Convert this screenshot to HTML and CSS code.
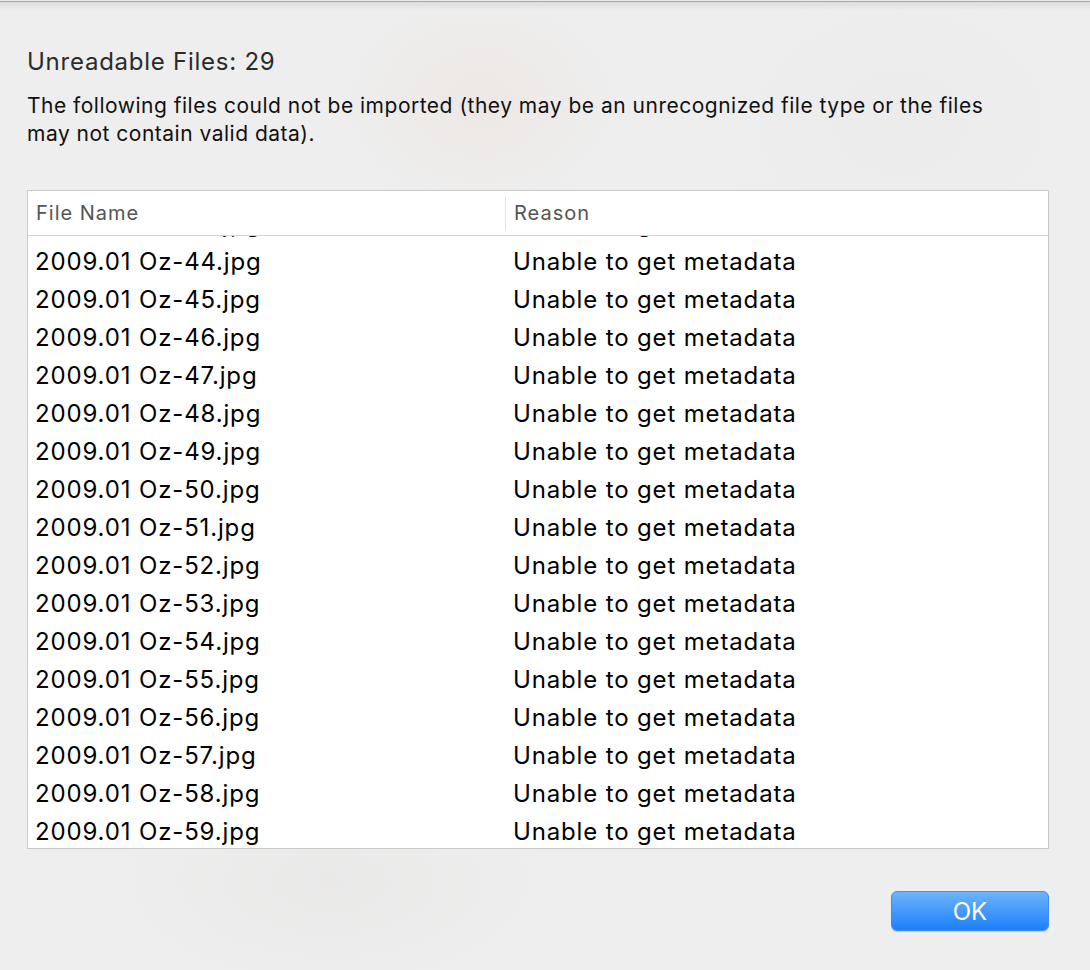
FILE: index.html
```html
<!DOCTYPE html>
<html>
<head>
<meta charset="utf-8">
<link rel="stylesheet" href="styles.css">
</head>
<body>
<div class="dialog">
  <h1 class="title">Unreadable Files: 29</h1>
  <p class="message">The following files could not be imported (they may be an unrecognized file type or the files may not contain valid data).</p>
  <div class="table">
    <div class="thead">
      <div class="th th-name">File Name</div>
      <div class="th th-reason">Reason</div>
    </div>
    <div class="tbody">
      <div class="rows">
        <div class="row"><span class="c-name">2009.01 Oz-43.jpg</span><span class="c-reason">Unable to get metadata</span></div>
        <div class="row"><span class="c-name">2009.01 Oz-44.jpg</span><span class="c-reason">Unable to get metadata</span></div>
        <div class="row"><span class="c-name">2009.01 Oz-45.jpg</span><span class="c-reason">Unable to get metadata</span></div>
        <div class="row"><span class="c-name">2009.01 Oz-46.jpg</span><span class="c-reason">Unable to get metadata</span></div>
        <div class="row"><span class="c-name">2009.01 Oz-47.jpg</span><span class="c-reason">Unable to get metadata</span></div>
        <div class="row"><span class="c-name">2009.01 Oz-48.jpg</span><span class="c-reason">Unable to get metadata</span></div>
        <div class="row"><span class="c-name">2009.01 Oz-49.jpg</span><span class="c-reason">Unable to get metadata</span></div>
        <div class="row"><span class="c-name">2009.01 Oz-50.jpg</span><span class="c-reason">Unable to get metadata</span></div>
        <div class="row"><span class="c-name">2009.01 Oz-51.jpg</span><span class="c-reason">Unable to get metadata</span></div>
        <div class="row"><span class="c-name">2009.01 Oz-52.jpg</span><span class="c-reason">Unable to get metadata</span></div>
        <div class="row"><span class="c-name">2009.01 Oz-53.jpg</span><span class="c-reason">Unable to get metadata</span></div>
        <div class="row"><span class="c-name">2009.01 Oz-54.jpg</span><span class="c-reason">Unable to get metadata</span></div>
        <div class="row"><span class="c-name">2009.01 Oz-55.jpg</span><span class="c-reason">Unable to get metadata</span></div>
        <div class="row"><span class="c-name">2009.01 Oz-56.jpg</span><span class="c-reason">Unable to get metadata</span></div>
        <div class="row"><span class="c-name">2009.01 Oz-57.jpg</span><span class="c-reason">Unable to get metadata</span></div>
        <div class="row"><span class="c-name">2009.01 Oz-58.jpg</span><span class="c-reason">Unable to get metadata</span></div>
        <div class="row"><span class="c-name">2009.01 Oz-59.jpg</span><span class="c-reason">Unable to get metadata</span></div>
      </div>
    </div>
  </div>
  <div class="actions">
    <button class="btn-ok">OK</button>
  </div>
</div>
</body>
</html>
```

FILE: styles.css
```css
html, body {
  margin: 0;
  padding: 0;
  width: 1090px;
  height: 970px;
  overflow: hidden;
}
body {
  font-family: "Inter", "Roboto", "Liberation Sans", sans-serif;
  background: #ececec;
}
.dialog {
  box-sizing: border-box;
  width: 1090px;
  height: 970px;
  border-top: 1px solid #a9a9a9;
  margin-top: 1px;
  padding: 0 41px 0 27px;
  background:
    linear-gradient(to bottom, rgba(0,0,0,0.07), rgba(0,0,0,0) 9px),
    radial-gradient(ellipse 140px 110px at 480px 100px, rgba(236,226,220,0.5), rgba(236,236,236,0) 100%),
    radial-gradient(ellipse 220px 110px at 330px 880px, rgba(228,226,224,0.4), rgba(236,236,236,0) 100%),
    radial-gradient(ellipse 180px 140px at 900px 120px, rgba(232,232,232,0.4), rgba(236,236,236,0) 100%),
    #eeeeee;
}
.title {
  margin: 0;
  padding-top: 45px;
  font-size: 24px;
  font-weight: 400;
  line-height: 30px;
  color: #2b2b2b;
  letter-spacing: 0.75px;
}
.message {
  margin: 15px 0 0 0;
  font-size: 21px;
  line-height: 28px;
  color: #111;
  width: 968px;
  letter-spacing: 0.5px;
}
.table {
  margin-top: 42px;
  width: 1022px;
  height: 659px;
  box-sizing: border-box;
  border: 1px solid #c9c9c9;
  background: #fff;
  display: flex;
  flex-direction: column;
}
.thead {
  height: 45px;
  flex: none;
  box-sizing: border-box;
  border-bottom: 1px solid #d6d6d6;
  display: flex;
  align-items: center;
}
.th {
  font-size: 20px;
  color: #555;
  box-sizing: border-box;
  letter-spacing: 1px;
}
.th-name {
  width: 477px;
  padding-left: 8px;
}
.th-reason {
  padding-left: 8px;
  border-left: 1px solid #e2e2e2;
  height: 33px;
  line-height: 33px;
}
.tbody {
  flex: 1;
  overflow: hidden;
}
.rows {
  margin-top: -32px;
}
.row {
  height: 38px;
  display: flex;
  align-items: center;
  font-size: 24px;
  color: #000;
  letter-spacing: 0.85px;
}
.c-name {
  box-sizing: border-box;
  width: 478px;
  padding-left: 7px;
  flex: none;
}
.c-reason {
  padding-left: 7px;
}
.actions {
  display: flex;
  justify-content: flex-end;
  margin-top: 42px;
}
.btn-ok {
  width: 158px;
  height: 40px;
  border-radius: 6px;
  border: 1px solid #3d8ef5;
  background: linear-gradient(to bottom, #6db4fa, #1c7ffb);
  color: #fff;
  font-family: inherit;
  font-size: 24px;
  box-shadow: 0 1px 1px rgba(0,0,0,0.15);
  padding: 0;
}
```
